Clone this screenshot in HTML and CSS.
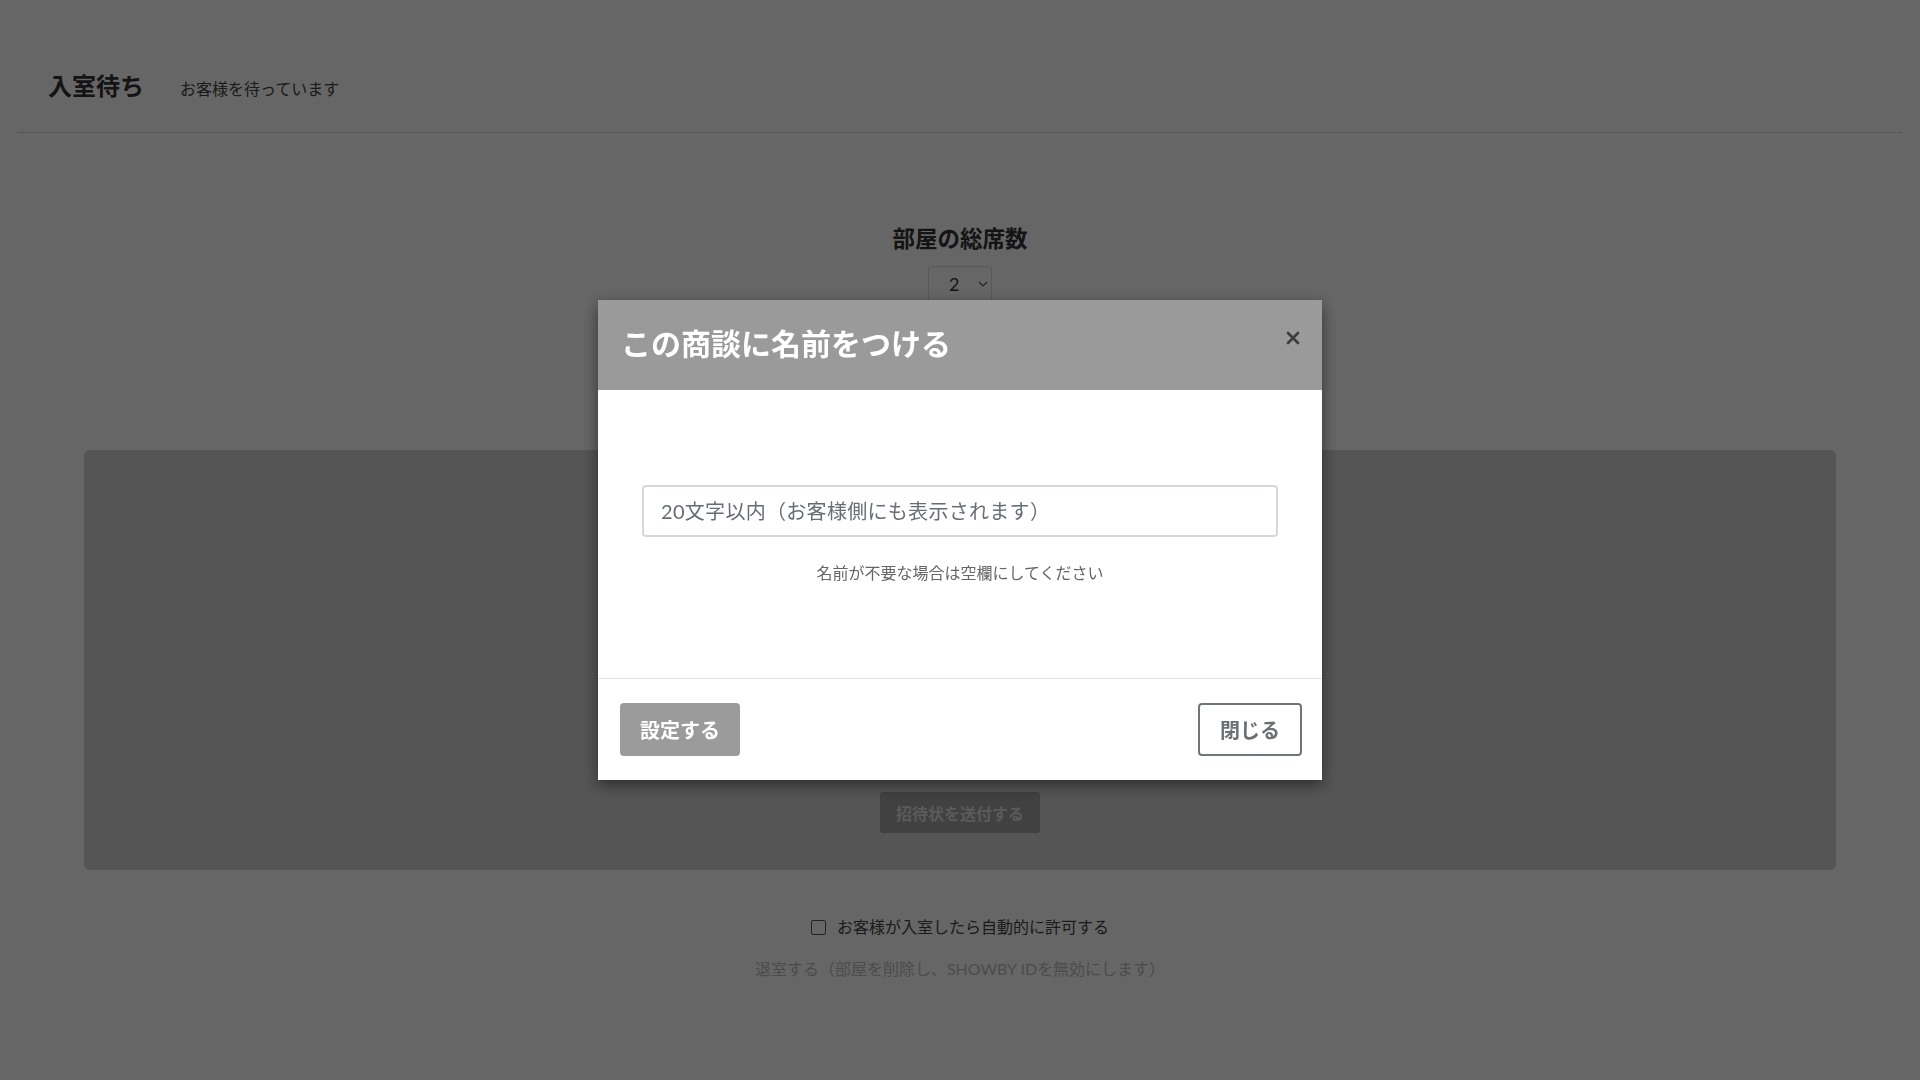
FILE: index.html
```html
<!DOCTYPE html>
<html lang="ja">
<head>
  <meta charset="UTF-8">
  <meta name="viewport" content="width=device-width, initial-scale=1.0">
  <title>入室待ち</title>
  <link rel="stylesheet" href="styles.css">
</head>
<body>
  <div class="page">
    <header class="page-header">
      <h1>入室待ち</h1>
      <p class="status">お客様を待っています</p>
    </header>

    <section class="seats">
      <h2>部屋の総席数</h2>
      <div class="select">
        <span>2</span>
        <svg width="10" height="6" viewBox="0 0 10 6"><path d="M1 1l4 4 4-4" fill="none" stroke="#555" stroke-width="1.2"/></svg>
      </div>
    </section>

    <section class="room-panel">
      <button class="invite-btn" disabled>招待状を送付する</button>
    </section>

    <label class="auto-allow">
      <span class="checkbox"></span>
      お客様が入室したら自動的に許可する
    </label>
    <p class="leave">退室する（部屋を削除し、SHOWBY IDを無効にします）</p>
  </div>

  <!-- Name modal -->
  <div class="overlay">
    <div class="modal">
      <div class="modal-header">
        <h3>この商談に名前をつける</h3>
        <span class="close">
          <svg width="14" height="14" viewBox="0 0 14 14"><path d="M2 2l10 10M12 2L2 12" stroke="#3c3c3c" stroke-width="2.6" stroke-linecap="round"/></svg>
        </span>
      </div>
      <div class="modal-body">
        <input class="name-input" type="text" placeholder="20文字以内（お客様側にも表示されます）">
        <p class="hint">名前が不要な場合は空欄にしてください</p>
      </div>
      <div class="modal-footer">
        <button class="btn btn-primary">設定する</button>
        <button class="btn btn-outline">閉じる</button>
      </div>
    </div>
  </div>
</body>
</html>
```

FILE: styles.css
```css
body {
  margin: 0;
  background-color: white;
  color: #333;
  font-family: Lato, "Noto Sans CJK JP", sans-serif;
}

.page {
  padding: 0 18px;
  text-align: center;
}

.page-header {
  display: flex;
  align-items: baseline;
  gap: 36px;
  padding: 70px 30px 30px;
  border-bottom: 1px dotted #bbb;
  text-align: left;
}

.page-header h1 {
  margin: 0;
  font-size: 24px;
  line-height: 32px;
  font-weight: 700;
}

.status {
  margin: 0;
  font-size: 16px;
  line-height: 24px;
  color: #444;
}

.seats {
  padding-top: 91px;
  display: flex;
  flex-direction: column;
  align-items: center;
  gap: 12px;
}

.seats h2 {
  margin: 0;
  font-size: 22.5px;
  line-height: 30px;
  font-weight: 700;
}

.select {
  width: 64px;
  height: 36px;
  box-sizing: border-box;
  padding-left: 20px;
  border: 1px solid #dcdcdc;
  border-radius: 4px;
  display: flex;
  align-items: center;
  gap: 19px;
  font-size: 18px;
  color: #333;
}

.room-panel {
  margin: 148px 66px 0;
  height: 420px;
  box-sizing: border-box;
  padding-bottom: 37px;
  background-color: #d4d4d4;
  border-radius: 6px;
  display: flex;
  flex-direction: column;
  justify-content: flex-end;
  align-items: center;
}

.invite-btn {
  width: 160px;
  height: 41px;
  border: none;
  border-radius: 3px;
  background-color: #a2a2a2;
  color: #e2e2e2;
  font-family: inherit;
  font-size: 16px;
  font-weight: 700;
}

.auto-allow {
  margin-top: 45px;
  display: flex;
  align-items: center;
  justify-content: center;
  gap: 11px;
  font-size: 16px;
  line-height: 24px;
  color: #444;
}

.checkbox {
  width: 13px;
  height: 13px;
  border: 1px solid #555;
  border-radius: 2px;
  background: white;
}

.leave {
  margin: 18px 0 0;
  font-size: 16px;
  line-height: 24px;
  color: #bdbdbd;
}

/* modal */

.overlay {
  position: fixed;
  inset: 0;
  background-color: rgba(0, 0, 0, 0.6);
  display: flex;
  align-items: center;
  justify-content: center;
}

.modal {
  width: 724px;
  background-color: white;
  box-shadow: 0 5px 15px rgba(0, 0, 0, 0.5);
}

.modal-header {
  height: 90px;
  box-sizing: border-box;
  padding: 0 22px 5px 23px;
  background-color: #9a9a9b;
  display: flex;
  align-items: center;
  justify-content: space-between;
}

.modal-header h3 {
  margin: 0;
  color: white;
  font-size: 30px;
  line-height: 40px;
  font-weight: 700;
}

.close {
  display: flex;
  margin-bottom: 9px;
  cursor: pointer;
}

.modal-body {
  padding: 95px 44px 93px;
  text-align: center;
}

.name-input {
  display: block;
  width: 100%;
  height: 52px;
  box-sizing: border-box;
  padding: 0 17px;
  border: 2px solid #d3d9de;
  border-radius: 4px;
  font-family: inherit;
  font-size: 20px;
  letter-spacing: 0.3px;
  color: #333;
}

.name-input::placeholder {
  color: #666d74;
}

.hint {
  margin: 24px 0 0;
  font-size: 16px;
  line-height: 24px;
  color: #666;
}

.modal-footer {
  height: 102px;
  box-sizing: border-box;
  padding: 0 20px 0 22px;
  border-top: 1px solid #e2e2e2;
  display: flex;
  align-items: center;
  justify-content: space-between;
}

.btn {
  height: 53px;
  padding: 0 20px;
  border-radius: 4px;
  font-family: inherit;
  font-size: 20px;
  font-weight: 700;
  cursor: pointer;
}

.btn-primary {
  background-color: #9b9b9b;
  color: white;
  border: none;
}

.btn-outline {
  background-color: white;
  color: #6b7075;
  border: 2px solid #6e757b;
}
```
